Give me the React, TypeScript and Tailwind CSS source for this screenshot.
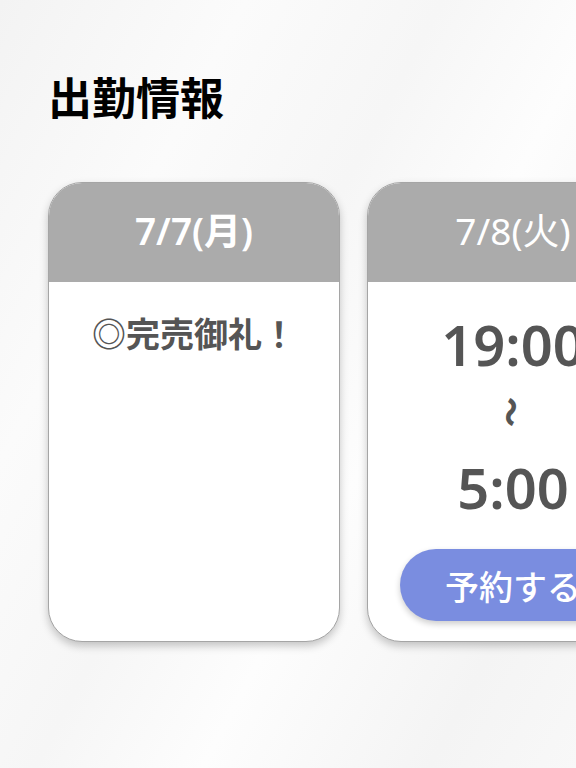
const font = "font-['Noto_Sans','Noto_Sans_CJK_JP',sans-serif]";

type Shift = {
  date: string;
  bold?: boolean;
  soldOut?: boolean;
  start?: string;
  end?: string;
};

const shifts: Shift[] = [
  { date: "7/7(月)", bold: true, soldOut: true },
  { date: "7/8(火)", start: "19:00", end: "5:00" },
];

function ShiftCard({ shift }: { shift: Shift }) {
  return (
    <div className="flex h-[460px] w-[292px] shrink-0 flex-col overflow-hidden rounded-[34px] border border-[#a5a5a5] bg-white shadow-[0_4px_8px_rgba(0,0,0,0.22)]">
      <div className="flex h-[99px] shrink-0 items-center justify-center bg-[#ababab] pb-1">
        <span
          className={`text-[37px] leading-none text-white ${shift.bold ? "font-semibold" : "font-normal"}`}
        >
          {shift.date}
        </span>
      </div>
      <div className="flex flex-1 flex-col items-center px-8 pt-[34px] pb-5 text-[#555]">
        {shift.soldOut ? (
          <p className="font-['Noto_Sans_CJK_JP',sans-serif] text-[34px] font-bold leading-none">◎完売御礼！</p>
        ) : (
          <>
            <p className="text-[56px] font-semibold leading-none">{shift.start}</p>
            <p className="mt-[28px] flex h-6 items-center">
              <span className="inline-block rotate-90 font-['Noto_Sans_CJK_JP',sans-serif] text-[30px] font-black leading-none">〜</span>
            </p>
            <p className="mt-[35px] text-[56px] font-semibold leading-none">{shift.end}</p>
            <button
              type="button"
              className="mt-auto flex h-[72px] w-full items-center justify-center rounded-full bg-[#7a8de0] font-['Noto_Sans_CJK_JP',sans-serif] text-[34px] font-medium text-white shadow-[0_3px_6px_rgba(0,0,0,0.2)]"
            >
              予約する
            </button>
          </>
        )}
      </div>
    </div>
  );
}

export default function App() {
  return (
    <div
      className={`${font} h-[768px] w-[576px] overflow-hidden bg-[linear-gradient(118deg,#f3f3f3_0%,#fbfbfb_25%,#f6f6f6_45%,#fdfdfd_62%,#f4f4f4_85%,#f8f8f8_100%)]`}
    >
      <div className="h-full pl-12 pt-[74px]">
        <h1 className="font-['Noto_Sans_CJK_JP',sans-serif] text-[44px] font-bold leading-none text-black">出勤情報</h1>
        <div className="mt-[64px] flex gap-[27px]">
          {shifts.map((s) => (
            <ShiftCard key={s.date} shift={s} />
          ))}
        </div>
      </div>
    </div>
  );
}
